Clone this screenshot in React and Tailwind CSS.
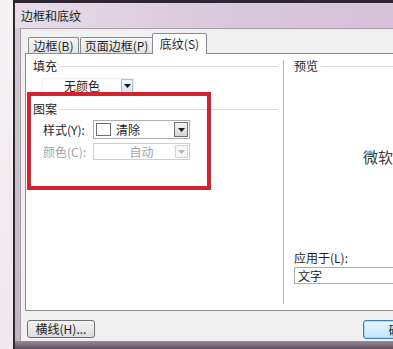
import React from 'react';

const font = { fontFamily: '"Noto Sans CJK SC", "Noto Sans", sans-serif' };

const Arrow = ({ disabled }) => (
  <svg width="7" height="4" viewBox="0 0 7 4" className="block">
    <path d="M0 0 H7 L3.5 4 Z" fill={disabled ? '#b8b8b8' : '#1a1a1a'} />
  </svg>
);

const GroupTitle = ({ children }) => (
  <div className="flex h-[14px] items-center gap-[3px]">
    <span className="leading-none text-[#1e1e1e]">{children}</span>
    <div className="h-px flex-1 bg-[#dcdcdc]" />
  </div>
);

const Tab = ({ label, active, className = '' }) =>
  active ? (
    <div className={`relative z-10 -mb-px flex h-[21px] items-center justify-center rounded-t-[2px] border border-b-0 border-[#898c95] bg-white ${className}`}>
      <span className="leading-none whitespace-nowrap">{label}</span>
    </div>
  ) : (
    <div className={`flex h-[16px] items-center justify-center rounded-t-[2px] border border-b-0 border-[#898c95] bg-gradient-to-b from-[#f5f5f5] to-[#e3e3e3] ${className}`}>
      <span className="leading-none whitespace-nowrap">{label}</span>
    </div>
  );

export default function App() {
  return (
    <div className="flex h-[349px] w-[393px] overflow-hidden bg-[#f4eff1] text-[12px] text-[#1e1e1e]" style={font}>
      <div className="w-[13px] shrink-0 bg-gradient-to-b from-[#f7f3f5] to-[#efe7ec]" />
      <div className="flex w-[460px] shrink-0 flex-col border-l-2 border-t-[3px] border-[#2e2630] bg-[#d9c8da]">
        <div className="flex h-[25px] shrink-0 items-center bg-gradient-to-r from-[#e7dde8] via-[#d8c6da] to-[#d5c1d8] pl-[6px]">
          <span className="leading-none text-[#1a1a1a]">边框和底纹</span>
        </div>
        <div className="flex h-[313px] shrink-0">
          <div className="w-[5px] shrink-0 bg-gradient-to-b from-[#d6cad6] to-[#c3b4c4]" />
          <div className="flex min-w-0 flex-1 flex-col border-l border-t border-[#a49aa6] bg-[#f0f0f0] pl-[4px]">
            <div className="flex items-end pl-[3px] pt-[4px]">
              <Tab label="边框(B)" className="w-[51px]" />
              <Tab label="页面边框(P)" className="ml-[1px] w-[73px]" />
              <Tab label="底纹(S)" active className="-ml-px w-[55px]" />
            </div>
            <div className="relative flex h-[258px] shrink-0 border border-[#898c95] bg-white">
              <div className="flex w-[257px] shrink-0 flex-col pl-[7px] pr-[5px] pt-[5px]">
                <GroupTitle>填充</GroupTitle>
                <div className="ml-[9px] mt-[5px] flex h-[16px] w-[92px] border border-[#f2f2f2] bg-white">
                  <div className="flex flex-1 items-center justify-center leading-none">无颜色</div>
                  <div className="flex w-[12px] items-center justify-center border border-[#9cc4e0] bg-gradient-to-b from-[#eef6fc] to-[#d5e8f6]">
                    <Arrow />
                  </div>
                </div>
                <div className="mt-[8px]">
                  <GroupTitle>图案</GroupTitle>
                </div>
                <div className="mt-[4px] flex items-center pl-[10px]">
                  <span className="w-[50px] leading-none">样式(Y):</span>
                  <div className="flex h-[19px] w-[97px] items-center border border-[#abadb3] bg-white pl-[2px]">
                    <div className="h-[13px] w-[15px] border border-[#6f6f6f] bg-white" />
                    <span className="ml-[5px] flex-1 leading-none">清除</span>
                    <div className="mr-px flex h-[15px] w-[14px] items-center justify-center border border-[#707070] bg-gradient-to-b from-[#f4f4f4] to-[#d4d4d4]">
                      <Arrow />
                    </div>
                  </div>
                </div>
                <div className="mt-[4px] flex items-center pl-[10px] text-[#a3a3a3]">
                  <span className="w-[50px] leading-none">颜色(C):</span>
                  <div className="flex h-[17px] w-[97px] items-center border border-[#cfcfcf] bg-white">
                    <span className="flex-1 pl-[14px] text-center leading-none">自动</span>
                    <div className="mr-px flex h-[13px] w-[13px] items-center justify-center border border-[#d6d6d6] bg-[#f6f6f6]">
                      <Arrow disabled />
                    </div>
                  </div>
                </div>
              </div>
              <div className="my-[6px] w-px shrink-0 bg-[#b9b9b9]" />
              <div className="flex min-w-0 flex-1 flex-col pb-[26px] pl-[10px] pr-[10px] pt-[5px]">
                <GroupTitle>预览</GroupTitle>
                <div className="mt-[76px] pl-[69px] text-[15px] leading-none whitespace-nowrap text-[#3a3a3a]">微软卓越 AaBbCc</div>
                <div className="mt-auto flex h-[14px] items-center leading-none">应用于(L):</div>
                <div className="mt-[2px] flex h-[17px] items-center border border-[#abadb3] bg-white pl-[3px] leading-none">文字</div>
              </div>
              <div className="pointer-events-none absolute left-[1px] top-[38px] h-[98px] w-[184px] border-[4px] border-[#d2232f]" />
            </div>
            <div className="mt-[9px] flex">
              <button type="button" className="ml-[2px] flex h-[18px] w-[68px] shrink-0 items-center justify-center whitespace-nowrap rounded-[3px] border border-[#707070] bg-gradient-to-b from-[#f3f3f3] to-[#dcdcdc] text-[12px] leading-none">
                横线(H)...
              </button>
              <button type="button" className="ml-[268px] flex h-[19px] w-[75px] shrink-0 items-center justify-center whitespace-nowrap rounded-[3px] border border-[#3c7fb1] bg-gradient-to-b from-[#eaf6fd] to-[#bee6fd] leading-none shadow-[inset_0_0_0_1px_#a7d9f5]">
                确定
              </button>
            </div>
          </div>
        </div>
        <div className="min-h-0 flex-1 bg-gradient-to-b from-[#9a8a9a] to-[#5e4f5f]" />
      </div>
    </div>
  );
}
